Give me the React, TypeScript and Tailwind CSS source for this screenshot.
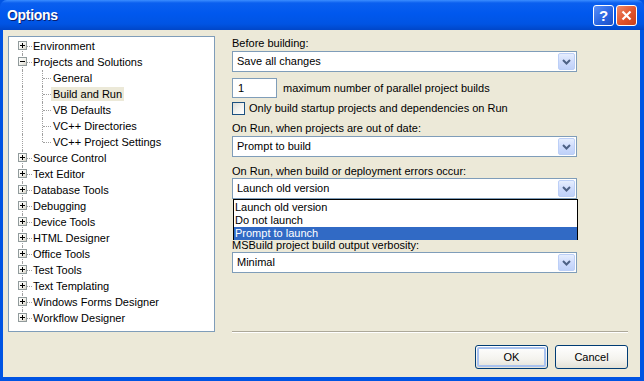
import React from 'react'

const font = { fontFamily: '"Liberation Sans", Arial, sans-serif' }

type Node = { label: string; children?: string[]; expanded?: boolean }

const tree: Node[] = [
  { label: 'Environment' },
  {
    label: 'Projects and Solutions',
    expanded: true,
    children: ['General', 'Build and Run', 'VB Defaults', 'VC++ Directories', 'VC++ Project Settings'],
  },
  { label: 'Source Control' },
  { label: 'Text Editor' },
  { label: 'Database Tools' },
  { label: 'Debugging' },
  { label: 'Device Tools' },
  { label: 'HTML Designer' },
  { label: 'Office Tools' },
  { label: 'Test Tools' },
  { label: 'Text Templating' },
  { label: 'Windows Forms Designer' },
  { label: 'Workflow Designer' },
]

function ExpandBox({ open }: { open?: boolean }) {
  return (
    <div className="absolute left-[9px] top-[3px] w-[9px] h-[9px] border border-[#919b9c] bg-[linear-gradient(135deg,#ffffff_0%,#f0f0ea_60%,#d6d0c5_100%)] flex items-center justify-center">
      <div className="relative w-[5px] h-[5px]">
        <div className="absolute left-0 top-[2px] w-[5px] h-px bg-black" />
        {!open && <div className="absolute left-[2px] top-0 w-px h-[5px] bg-black" />}
      </div>
    </div>
  )
}

function Tree() {
  const last = tree.length - 1
  return (
    <div className="w-[207px] h-[296px] border border-[#7f9db9] bg-white pt-[1px]">
      {tree.map((n, i) => (
        <div key={n.label}>
          <div className="relative h-4 flex items-center">
            {/* vertical root line */}
            <div
              className={`absolute left-[13px] w-0 border-l border-dotted border-[#a0a0a0] ${
                i === 0 ? 'top-2 h-2' : i === last ? 'top-0 h-2' : 'top-0 h-4'
              }`}
            />
            <div className="absolute left-[18px] top-2 w-[5px] border-t border-dotted border-[#a0a0a0]" />
            <ExpandBox open={n.expanded} />
            <span className="ml-[24px] text-[11px] text-black leading-none whitespace-nowrap">{n.label}</span>
          </div>
          {n.expanded &&
            n.children!.map((c, j) => (
              <div key={c} className="relative h-4 flex items-center">
                <div className="absolute left-[13px] top-0 h-4 w-0 border-l border-dotted border-[#a0a0a0]" />
                <div
                  className={`absolute left-[33px] w-0 border-l border-dotted border-[#a0a0a0] ${
                    j === n.children!.length - 1 ? 'top-0 h-2' : 'top-0 h-4'
                  }`}
                />
                <div className="absolute left-[34px] top-2 w-[8px] border-t border-dotted border-[#a0a0a0]" />
                <span
                  className={`ml-[42px] px-[2px] h-[14px] flex items-center text-[11px] text-black leading-none whitespace-nowrap ${
                    c === 'Build and Run' ? 'bg-[#ece9d8]' : ''
                  }`}
                >
                  {c}
                </span>
              </div>
            ))}
        </div>
      ))}
    </div>
  )
}

function Chevron() {
  return (
    <div className="w-[17px] h-[17px] rounded-[2px] border border-[#bccff7] bg-[linear-gradient(to_bottom,#e6eefe_0%,#cfdcfc_50%,#bfd1f9_100%)] flex items-center justify-center">
      <svg width="9" height="6" viewBox="0 0 9 6">
        <path d="M1 1 L4.5 4.5 L8 1" fill="none" stroke="#4d6185" strokeWidth="2" />
      </svg>
    </div>
  )
}

function Combo({ value }: { value: string }) {
  return (
    <div className="w-[345px] h-[21px] border border-[#7f9db9] bg-white flex items-center justify-between pl-[4px] pr-px">
      <span className="text-[11px] text-black leading-none">{value}</span>
      <Chevron />
    </div>
  )
}

function Label({ children }: { children: React.ReactNode }) {
  return <div className="h-[13px] text-[11px] text-black leading-[13px] whitespace-nowrap">{children}</div>
}

function XpButton({ label, def }: { label: string; def?: boolean }) {
  return (
    <div className="w-[73px] h-[24px] rounded-[3px] border border-[#003c74] bg-[linear-gradient(to_bottom,#ffffff_0%,#f4f3ee_60%,#e3e1d6_100%)] p-px">
      <div
        className={`w-full h-full rounded-[2px] flex items-center justify-center text-[11px] text-black ${
          def ? 'border-2 border-[#a9c2ef]' : ''
        }`}
      >
        {label}
      </div>
    </div>
  )
}

export default function App() {
  return (
    <div style={font} className="w-[644px] h-[381px] flex flex-col bg-[#0054e3] overflow-hidden">
      {/* title bar */}
      <div className="h-[30px] flex items-center justify-between pl-[7px] pr-[7px] rounded-t-[7px] bg-[linear-gradient(to_bottom,#3b8dff_0%,#0a5fef_10%,#0058ee_45%,#0054e3_80%,#0046c8_100%)]">
        <span className="text-white font-bold text-[14px] tracking-[-0.3px] [text-shadow:1px_1px_0_#0a1e6e]">Options</span>
        <div className="flex gap-[2px] pt-px">
          <div className="w-[21px] h-[21px] rounded-[3px] border border-white bg-[linear-gradient(135deg,#5a8ff8_0%,#2663e0_60%,#1d4fc4_100%)] flex items-center justify-center text-white font-bold text-[15px] leading-none">
            ?
          </div>
          <div className="w-[21px] h-[21px] rounded-[3px] border border-white bg-[linear-gradient(135deg,#ee8a6a_0%,#e0532b_55%,#c9401b_100%)] flex items-center justify-center">
            <svg width="11" height="11" viewBox="0 0 11 11">
              <path d="M1.5 1.5 L9.5 9.5 M9.5 1.5 L1.5 9.5" stroke="white" strokeWidth="2.2" />
            </svg>
          </div>
        </div>
      </div>

      {/* body */}
      <div className="flex-1 ml-[3px] mr-[4px] mb-[4px] bg-[#ece9d8] flex pt-[6px] pl-[5px]">
        <Tree />

        <div className="ml-[17px] w-[396px] flex flex-col">
          <div className="mt-[1px]">
            <Label>Before building:</Label>
          </div>
          <div className="mt-[1px]">
            <Combo value="Save all changes" />
          </div>
          <div className="mt-[6px] h-[20px] flex items-center">
            <div className="w-[45px] h-[20px] border border-[#7f9db9] bg-white flex items-center pl-[5px] text-[11px] leading-none">
              1
            </div>
            <span className="ml-[6px] text-[11px] leading-none">maximum number of parallel project builds</span>
          </div>
          <div className="mt-[3px] h-[14px] flex items-center">
            <div className="w-[13px] h-[13px] border border-[#1c5180] bg-[linear-gradient(135deg,#dcdcd7_0%,#f2f2ee_50%,#ffffff_100%)]" />
            <span className="ml-[4px] text-[11px] leading-none">Only build startup projects and dependencies on Run</span>
          </div>
          <div className="mt-[7px]">
            <Label>On Run, when projects are out of date:</Label>
          </div>
          <div className="mt-[1px]">
            <Combo value="Prompt to build" />
          </div>
          <div className="mt-[8px]">
            <Label>On Run, when build or deployment errors occur:</Label>
          </div>
          <div className="relative">
            <Combo value="Launch old version" />
            <div className="absolute left-[1px] top-[21px] w-[345px] h-[41px] border border-black bg-white z-10 flex flex-col pt-px">
              <div className="h-[13px] pl-[1px] flex items-center text-[11px]">Launch old version</div>
              <div className="h-[13px] pl-[1px] flex items-center text-[11px]">Do not launch</div>
              <div className="h-[13px] pl-[1px] flex items-center text-[11px] bg-[#316ac5] text-white">
                Prompt to launch
              </div>
            </div>
          </div>
          <div className="mt-[40px]">
            <Label>MSBuild project build output verbosity:</Label>
          </div>
          <div>
            <Combo value="Minimal" />
          </div>

          <div className="mt-[58px] h-[2px] border-t border-[#aca899] border-b border-b-white" />
          <div className="mt-[12px] flex justify-end gap-[7px]">
            <XpButton label="OK" def />
            <XpButton label="Cancel" />
          </div>
        </div>
      </div>
    </div>
  )
}
